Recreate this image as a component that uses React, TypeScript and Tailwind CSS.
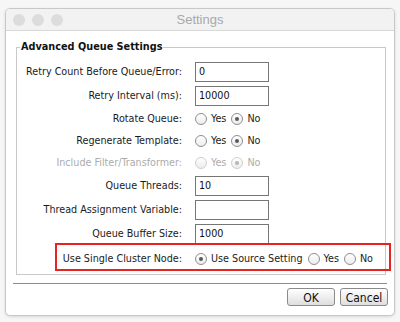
import React from 'react'

const font = { fontFamily: '"DejaVu Sans Condensed", "DejaVu Sans", sans-serif' }

function Radio({ checked = false, disabled = false }: { checked?: boolean; disabled?: boolean }) {
  return (
    <span
      className={`flex h-[12px] w-[12px] shrink-0 items-center justify-center rounded-full border bg-gradient-to-b from-white to-[#ececec] ${
        disabled ? 'border-[#cfcfcf]' : 'border-[#8f8f8f]'
      }`}
    >
      {checked && (
        <span className={`h-[4px] w-[4px] rounded-full ${disabled ? 'bg-[#b5b5b5]' : 'bg-[#5a5a5a]'}`} />
      )}
    </span>
  )
}

function RadioOption({ label, checked, disabled }: { label: string; checked?: boolean; disabled?: boolean }) {
  return (
    <span className={`flex items-center gap-[4px] ${disabled ? 'text-[#acacac]' : 'text-[#1b1b1b]'}`}>
      <Radio checked={checked} disabled={disabled} />
      <span>{label}</span>
    </span>
  )
}

function Row({ label, h, disabled, children }: { label: string; h: string; disabled?: boolean; children: React.ReactNode }) {
  return (
    <div className={`flex items-center ${h}`}>
      <div className={`w-[166px] pr-[1px] text-right ${disabled ? 'text-[#acacac]' : 'text-[#1b1b1b]'}`}>{label}</div>
      <div className="flex items-center gap-[5px] pl-[12px]">{children}</div>
    </div>
  )
}

function TextBox({ value }: { value: string }) {
  return (
    <div className="flex h-[20px] w-[74px] items-center border border-[#767676] bg-white pl-[3px] text-[#111]">
      {value}
    </div>
  )
}

export default function App() {
  return (
    <div className="h-[322px] w-[400px] bg-[#f6f6f6] pl-[5px] pt-[8px]" style={font}>
      <div className="relative h-[308px] w-[390px] overflow-hidden rounded-[5px] border border-[#c8c8c8] bg-white shadow-[0_1px_3px_rgba(0,0,0,0.12)]">
        {/* title bar */}
        <div className="relative flex h-[22px] items-center border-b border-[#d8d8d8] bg-[#f2f2f2]">
          <div className="flex gap-[7px] pl-[7px]">
            <span className="h-[12px] w-[12px] rounded-full bg-[#dcdcdc]" />
            <span className="h-[12px] w-[12px] rounded-full bg-[#dcdcdc]" />
            <span className="h-[12px] w-[12px] rounded-full bg-[#dcdcdc]" />
          </div>
          <div
            className="absolute inset-0 flex items-center justify-center text-[13px] text-[#a9a9a9]"
            style={{ fontFamily: '"Liberation Sans", Arial, sans-serif' }}
          >
            Settings
          </div>
        </div>

        {/* group */}
        <fieldset className="ml-[10px] mt-[8px] w-[370px] border border-[#c9c9c9] pb-[2px] pt-[5px] text-[10.7px]">
          <legend className="ml-[3px] px-[1px] text-[10.8px] font-bold text-[#111]">Advanced Queue Settings</legend>
          <Row label="Retry Count Before Queue/Error:" h="h-[24px]">
            <TextBox value="0" />
          </Row>
          <Row label="Retry Interval (ms):" h="h-[24px]">
            <TextBox value="10000" />
          </Row>
          <Row label="Rotate Queue:" h="h-[22px]">
            <RadioOption label="Yes" />
            <RadioOption label="No" checked />
          </Row>
          <Row label="Regenerate Template:" h="h-[22px]">
            <RadioOption label="Yes" />
            <RadioOption label="No" checked />
          </Row>
          <Row label="Include Filter/Transformer:" h="h-[22px]" disabled>
            <RadioOption label="Yes" disabled />
            <RadioOption label="No" checked disabled />
          </Row>
          <Row label="Queue Threads:" h="h-[24px]">
            <TextBox value="10" />
          </Row>
          <Row label="Thread Assignment Variable:" h="h-[24px]">
            <TextBox value="" />
          </Row>
          <Row label="Queue Buffer Size:" h="h-[24px]">
            <TextBox value="1000" />
          </Row>
          <Row label="Use Single Cluster Node:" h="h-[26px]">
            <RadioOption label="Use Source Setting" checked />
            <RadioOption label="Yes" />
            <RadioOption label="No" />
          </Row>
        </fieldset>

        {/* highlight annotation */}
        <div className="absolute left-[49px] top-[234px] h-[28px] w-[336px] border-2 border-[#e8231f]" />

        {/* footer */}
        <div className="mx-[7px] mt-[8px] h-[2px] border-t border-[#8c8c8c] border-b-[#e6e6e6]" />
        <div className="flex justify-end gap-[5px] pr-[6px] pt-[3px] text-[12px]">
          <button className="h-[18px] w-[48px] rounded-[3px] border border-[#8a8a8a] bg-gradient-to-b from-white to-[#dedede] text-[#111]">
            OK
          </button>
          <button className="h-[18px] w-[48px] rounded-[3px] border border-[#8a8a8a] bg-gradient-to-b from-white to-[#dedede] text-[#111]">
            Cancel
          </button>
        </div>
      </div>
    </div>
  )
}
